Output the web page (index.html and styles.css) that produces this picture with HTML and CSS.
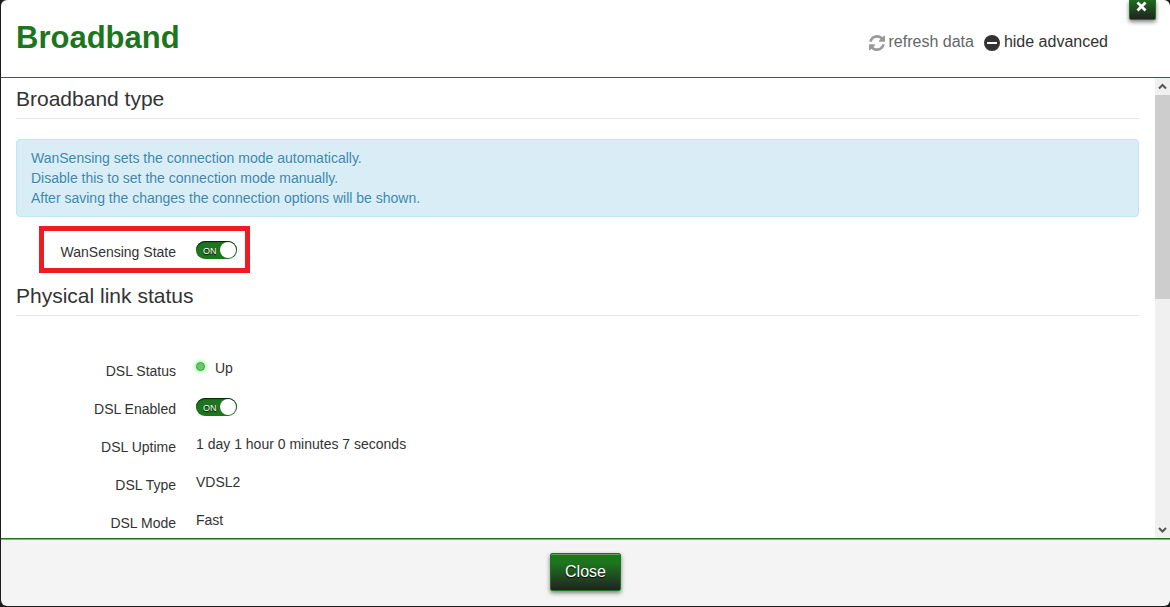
FILE: index.html
```html
<!DOCTYPE html>
<html lang="en">
<head>
<meta charset="utf-8">
<meta name="viewport" content="width=device-width, initial-scale=1">
<title>Broadband</title>
<link rel="stylesheet" href="styles.css">
</head>
<body>
<div class="modal" role="dialog" aria-labelledby="modal-title">
  <header class="modal-header">
    <h2 class="title" id="modal-title">Broadband</h2>
    <div class="actions">
      <button type="button" class="action action-muted">
        <svg class="icon" viewBox="0 0 1536 1536" aria-hidden="true"><path fill="currentColor" d="M1511 928q0 5-1 7-64 268-268 434.500T764 1536q-146 0-282.500-55T238 1324l-129 129q-19 19-45 19t-45-19-19-45V960q0-26 19-45t45-19h448q26 0 45 19t19 45-19 45l-137 137q71 66 161 102t187 36q134 0 250-65t186-179q11-17 53-117 8-23 30-23h192q13 0 22.500 9.500t9.500 22.500zm25-800v448q0 26-19 45t-45 19h-448q-26 0-45-19t-19-45 19-45l138-138Q969 256 768 256q-134 0-250 65T332 500q-11 17-53 117-8 23-30 23H50q-13 0-22.500-9.500T18 608v-7q65-268 270-434.500T768 0q146 0 284 55.500T1297 212l130-129q19-19 45-19t45 19 19 45z"/></svg>
        <span>refresh data</span>
      </button>
      <button type="button" class="action">
        <svg class="icon" viewBox="0 0 16 16" aria-hidden="true"><circle cx="8" cy="8" r="8" fill="currentColor"/><rect x="3" y="7" width="10" height="2" rx="0.500" fill="#fff"/></svg>
        <span>hide advanced</span>
      </button>
    </div>
    <button type="button" class="dismiss" aria-label="Dismiss">
      <svg class="dismiss-icon" viewBox="0 0 11 11" aria-hidden="true"><path d="M1.500 1.500l8 8M9.500 1.500l-8 8" stroke="#fff" stroke-width="2.800"/></svg>
    </button>
  </header>

  <div class="modal-body">
    <main class="content">
      <h3 class="legend">Broadband type</h3>
      <p class="alert">WanSensing sets the connection mode automatically.<br>Disable this to set the connection mode manually.<br>After saving the changes the connection options will be shown.</p>
      <div class="row highlighted">
        <label class="label" for="wansensing">WanSensing State</label>
        <span class="switch"><input class="switch-input" type="checkbox" id="wansensing" checked><span class="switch-text" aria-hidden="true">ON</span></span>
      </div>

      <h3 class="legend legend-spaced">Physical link status</h3>
      <div class="row">
        <span class="label">DSL Status</span>
        <span class="value status"><span class="light"></span>Up</span>
      </div>
      <div class="row">
        <label class="label" for="dsl-enabled">DSL Enabled</label>
        <span class="switch"><input class="switch-input" type="checkbox" id="dsl-enabled" checked><span class="switch-text" aria-hidden="true">ON</span></span>
      </div>
      <div class="row"><span class="label">DSL Uptime</span><span class="value">1 day 1 hour 0 minutes 7 seconds</span></div>
      <div class="row"><span class="label">DSL Type</span><span class="value">VDSL2</span></div>
      <div class="row"><span class="label">DSL Mode</span><span class="value">Fast</span></div>
    </main>
    <div class="scrollbar" aria-hidden="true">
      <svg class="arrow" viewBox="0 0 15 17"><path d="M4 10.500l3.500-3.500 3.500 3.500" fill="none" stroke="#555" stroke-width="2"/></svg>
      <div class="track"><div class="thumb"></div></div>
      <svg class="arrow" viewBox="0 0 15 17"><path d="M4 7l3.500 3.500 3.500-3.500" fill="none" stroke="#555" stroke-width="2"/></svg>
    </div>
  </div>

  <footer class="modal-footer">
    <button type="button" class="close">Close</button>
  </footer>
</div>
</body>
</html>
```
FILE: styles.css
```css
*, *::before, *::after { box-sizing: border-box; }

body {
  margin: 0;
  background: #1c1c1e;
  color: #333;
  font: 14px/20px "Liberation Sans", Arial, sans-serif;
}

button { font: inherit; cursor: pointer; }

.modal {
  display: flex;
  flex-direction: column;
  height: 100vh;
  border: solid #1c1c1e;
  border-width: 0 0 1px 1px;
}

.modal-header {
  position: relative;
  flex: none;
  display: flex;
  align-items: flex-start;
  justify-content: space-between;
  padding: 18px 62px 19px 15px;
  background: #fff;
  border-bottom: 1px solid #1d751d;
  border-radius: 6px 6px 0 0;
}

.title {
  margin: 0;
  color: #1d751d;
  font-size: 31px;
  font-weight: bold;
  line-height: 40px;
}

.actions {
  display: flex;
  gap: 10px;
  padding-top: 14px;
}

.action {
  display: flex;
  align-items: center;
  gap: 4px;
  padding: 0;
  border: 0;
  background: none;
  color: #333;
  font-size: 16px;
  line-height: 20px;
}

.action-muted { color: #666; }
.action-muted .icon { color: #999; }

.icon {
  width: 16px;
  height: 16px;
  margin-top: 2px;
}

.dismiss {
  position: absolute;
  top: 0;
  right: 14px;
  width: 27px;
  height: 20px;
  padding: 1px 2px 0 0;
  display: flex;
  justify-content: center;
  border: 1px solid #1d751d;
  border-top: 0;
  border-radius: 0 0 2px 2px;
  background: linear-gradient(#1d6a1d, #222);
  box-shadow: 0 2px 4px rgba(0, 0, 0, 0.5);
}

.dismiss-icon { width: 11px; height: 11px; }

.modal-body {
  flex: 1;
  min-height: 0;
  display: flex;
  background: #fff;
}

.content {
  flex: 1;
  overflow: hidden;
  padding: 0 16px 0 15px;
}

.legend {
  margin: 0 0 20px;
  padding-top: 2px;
  border-bottom: 1px solid #e5e5e5;
  font-size: 21px;
  font-weight: normal;
  line-height: 38px;
}

.legend-spaced { margin-bottom: 40px; }

.alert {
  margin: 0 0 20px;
  padding: 8px 14px;
  border: 1px solid #bce8f1;
  border-radius: 4px;
  background: #d9edf7;
  color: #3a87ad;
  text-shadow: 0 1px 0 rgba(255, 255, 255, 0.5);
}

.row {
  position: relative;
  display: flex;
  align-items: flex-start;
  gap: 20px;
  height: 38px;
}

.label {
  width: 160px;
  padding-top: 5px;
  text-align: right;
}

.value { padding-top: 2px; }

.highlighted::after {
  content: "";
  position: absolute;
  top: -11px;
  left: 23px;
  width: 211px;
  height: 47px;
  border: 5px solid #ed1c24;
  pointer-events: none;
}

.status {
  display: flex;
  align-items: flex-start;
  gap: 10px;
}

.light {
  width: 9px;
  height: 9px;
  margin-top: 4px;
  border: 1px solid #4a9f4a;
  border-radius: 50%;
  background: #6cc66c;
  box-shadow: 0 0 4px 1px #8f8;
}

.switch {
  position: relative;
  margin-top: 4px;
  height: 18px;
}

.switch-input {
  appearance: none;
  display: flex;
  justify-content: flex-end;
  width: 41px;
  height: 18px;
  margin: 0;
  padding: 1px;
  border-radius: 9px;
  background: #1d751d;
  box-shadow: inset 0 1px 1px #022402;
}

.switch-input::after {
  content: "";
  width: 16px;
  height: 16px;
  border-radius: 50%;
  background: #fff;
}

.switch-text {
  position: absolute;
  top: 0;
  left: 7px;
  color: #fff;
  font-size: 9px;
  line-height: 20px;
  text-shadow: 0 1px 1px #000;
  pointer-events: none;
}

.scrollbar {
  flex: none;
  display: flex;
  flex-direction: column;
  width: 15px;
  background: #f0f0f0;
}

.arrow { flex: none; width: 15px; height: 17px; }
.track { flex: 1; }
.thumb { height: 48%; background: #cdcdcd; }

.modal-footer {
  flex: none;
  display: flex;
  justify-content: center;
  padding: 14px 15px 15px;
  background: #f4f4f4;
  border-top: 1px solid #1d751d;
  border-radius: 0 0 6px 6px;
  box-shadow: inset 0 1px 0 #6abf6a;
}

.close {
  height: 38px;
  padding: 0 14px;
  border: 1px solid #1d751d;
  border-radius: 2px;
  background: linear-gradient(#1d751d 25%, #222);
  box-shadow: inset 0 1px 0 rgba(255, 255, 255, 0.3), 0 2px 4px rgba(0, 0, 0, 0.5);
  color: #fff;
  font-size: 16px;
  text-shadow: 0 1px 1px #000;
}
```
